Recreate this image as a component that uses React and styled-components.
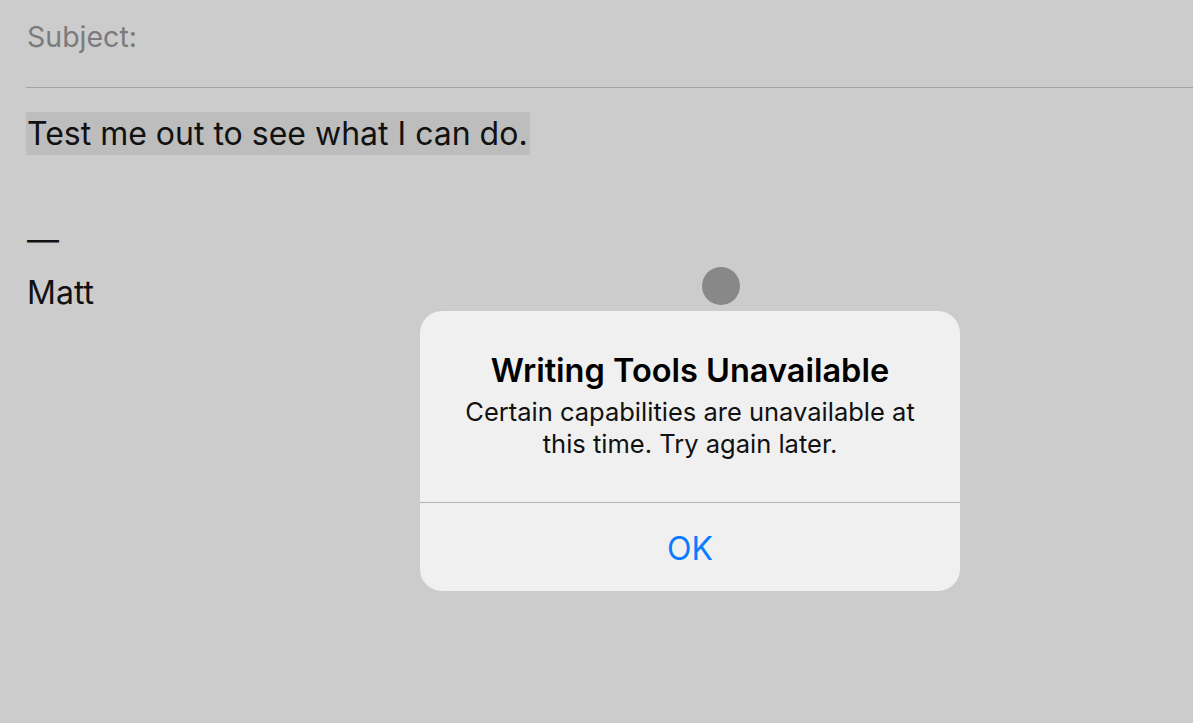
import React from 'react';
import styled, { createGlobalStyle } from 'styled-components';

const GlobalStyle = createGlobalStyle`
  html, body {
    margin: 0;
    padding: 0;
    background: #cccccc;
    font-family: Inter, "Noto Sans", sans-serif;
    -webkit-font-smoothing: antialiased;
  }
`;

const Screen = styled.div`
  position: relative;
  width: 1193px;
  height: 723px;
  overflow: hidden;
  background: #cccccc;
`;

const Compose = styled.div`
  display: flex;
  flex-direction: column;
  padding-left: 26px;
`;

const SubjectRow = styled.div`
  height: 88px;
  display: flex;
  align-items: flex-start;
  padding-top: 18px;
  box-sizing: border-box;
  border-bottom: 1px solid #a3a3a3;
  font-size: 28.5px;
  line-height: 38px;
  color: #7b7b7b;
  padding-left: 1px;
`;

const Body = styled.div`
  display: flex;
  flex-direction: column;
  padding-top: 19px;
  color: #111111;
  font-size: 32px;
`;

const Line = styled.div`
  height: 53px;
  line-height: 53px;
  display: flex;
  align-items: center;
  padding-left: 1px;
`;

const Highlight = styled.span`
  display: inline-block;
  height: 43px;
  line-height: 43px;
  background: #bdbdbd;
  margin-left: -1px;
  padding: 0 2px 0 1px;
`;

const Cursor = styled.div`
  position: absolute;
  left: 702px;
  top: 267px;
  width: 38px;
  height: 38px;
  border-radius: 50%;
  background: #888888;
`;

const Alert = styled.div`
  position: absolute;
  left: 420px;
  top: 311px;
  width: 540px;
  height: 280px;
  border-radius: 22px;
  background: #f0f0f0;
  display: flex;
  flex-direction: column;
  overflow: hidden;
`;

const AlertContent = styled.div`
  height: 192px;
  display: flex;
  flex-direction: column;
  align-items: center;
  padding-top: 40px;
  box-sizing: border-box;
  border-bottom: 1px solid #b3b3b3;
  text-align: center;
`;

const AlertTitle = styled.div`
  font-size: 32.5px;
  font-weight: 600;
  color: #000000;
  line-height: 40px;
`;

const AlertMessage = styled.div`
  margin-top: 5px;
  font-size: 25.5px;
  line-height: 32px;
  color: #111111;
  width: 470px;
`;

const AlertButton = styled.button`
  flex: 1;
  border: none;
  background: transparent;
  color: #0a7cff;
  font-family: inherit;
  font-size: 32px;
  padding: 2px 0 0;
  cursor: pointer;
`;

export default function App() {
  return (
    <Screen>
      <GlobalStyle />
      <Compose>
        <SubjectRow>Subject:</SubjectRow>
        <Body>
          <Line>
            <Highlight>Test me out to see what I can do.</Highlight>
          </Line>
          <Line />
          <Line>—</Line>
          <Line>Matt</Line>
        </Body>
      </Compose>
      <Cursor />
      <Alert>
        <AlertContent>
          <AlertTitle>Writing Tools Unavailable</AlertTitle>
          <AlertMessage>
            Certain capabilities are unavailable at this time. Try again later.
          </AlertMessage>
        </AlertContent>
        <AlertButton>OK</AlertButton>
      </Alert>
    </Screen>
  );
}
